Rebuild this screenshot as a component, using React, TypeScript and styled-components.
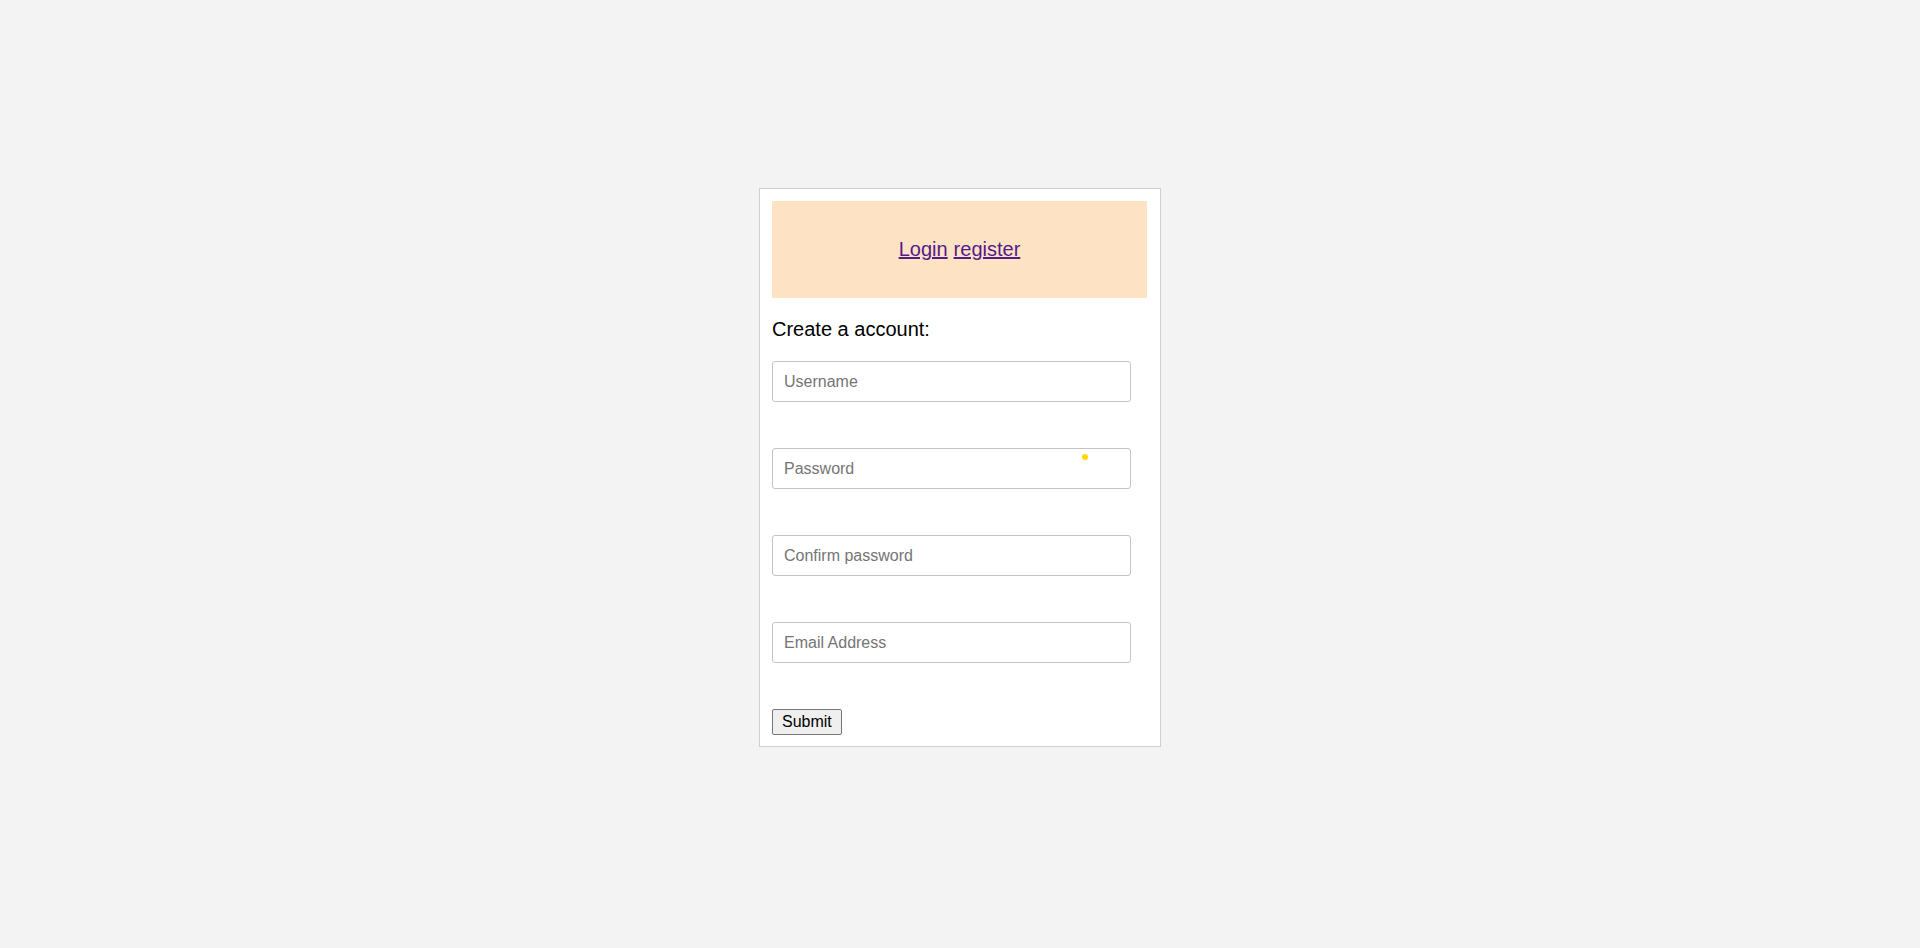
import styled, { createGlobalStyle } from "styled-components";

const GlobalStyle = createGlobalStyle`
  body {
    margin: 0;
    background: #f3f3f3;
    font-family: "Liberation Sans", Arial, sans-serif;
  }
`;

const Page = styled.div`
  display: flex;
  justify-content: center;
  padding-top: 188px;
  min-height: 4600px;
  box-sizing: border-box;
`;

const Card = styled.div`
  width: 402px;
  box-sizing: border-box;
  background: #fff;
  border: 1px solid #cfcfcf;
  padding: 12px 13px 11px 12px;
  display: flex;
  flex-direction: column;
  align-self: flex-start;
`;

const Header = styled.div`
  height: 97px;
  background: #fde3c3;
  display: flex;
  align-items: center;
  justify-content: center;
  gap: 6px;
`;

const NavLink = styled.a`
  color: #551a8b;
  font-size: 20px;
  text-decoration: underline;
`;

const Heading = styled.p`
  margin: 20px 0 20px;
  font-size: 20px;
  line-height: 23px;
  color: #000;
`;

const Field = styled.div`
  position: relative;
  width: 359px;
  margin-bottom: 46px;
`;

const Input = styled.input`
  width: 100%;
  height: 41px;
  box-sizing: border-box;
  border: 1px solid #c4c4c4;
  border-radius: 3px;
  padding: 0 11px;
  font-size: 16px;
  font-family: "Liberation Sans", Arial, sans-serif;
  &::placeholder {
    color: #757575;
  }
`;

const Dot = styled.span`
  position: absolute;
  left: 310px;
  top: 6px;
  width: 6px;
  height: 6px;
  border-radius: 50%;
  background: #ffd800;
`;

const SubmitButton = styled.button`
  align-self: flex-start;
  height: 26px;
  padding: 0 9px;
  font-size: 16px;
  font-family: "Liberation Sans", Arial, sans-serif;
  background: #efefef;
  border: 1px solid #767676;
  border-radius: 2px;
  color: #000;
`;

const fields = ["Username", "Password", "Confirm password", "Email Address"];

export default function App() {
  return (
    <>
      <GlobalStyle />
      <Page>
        <Card>
          <Header>
            <NavLink href="#">Login</NavLink>
            <NavLink href="#">register</NavLink>
          </Header>
          <Heading>Create a account:</Heading>
          {fields.map((f) => (
            <Field key={f}>
              <Input
                type={f.includes("assword") ? "password" : "text"}
                placeholder={f}
              />
              {f === "Password" && <Dot />}
            </Field>
          ))}
          <SubmitButton>Submit</SubmitButton>
        </Card>
      </Page>
    </>
  );
}
